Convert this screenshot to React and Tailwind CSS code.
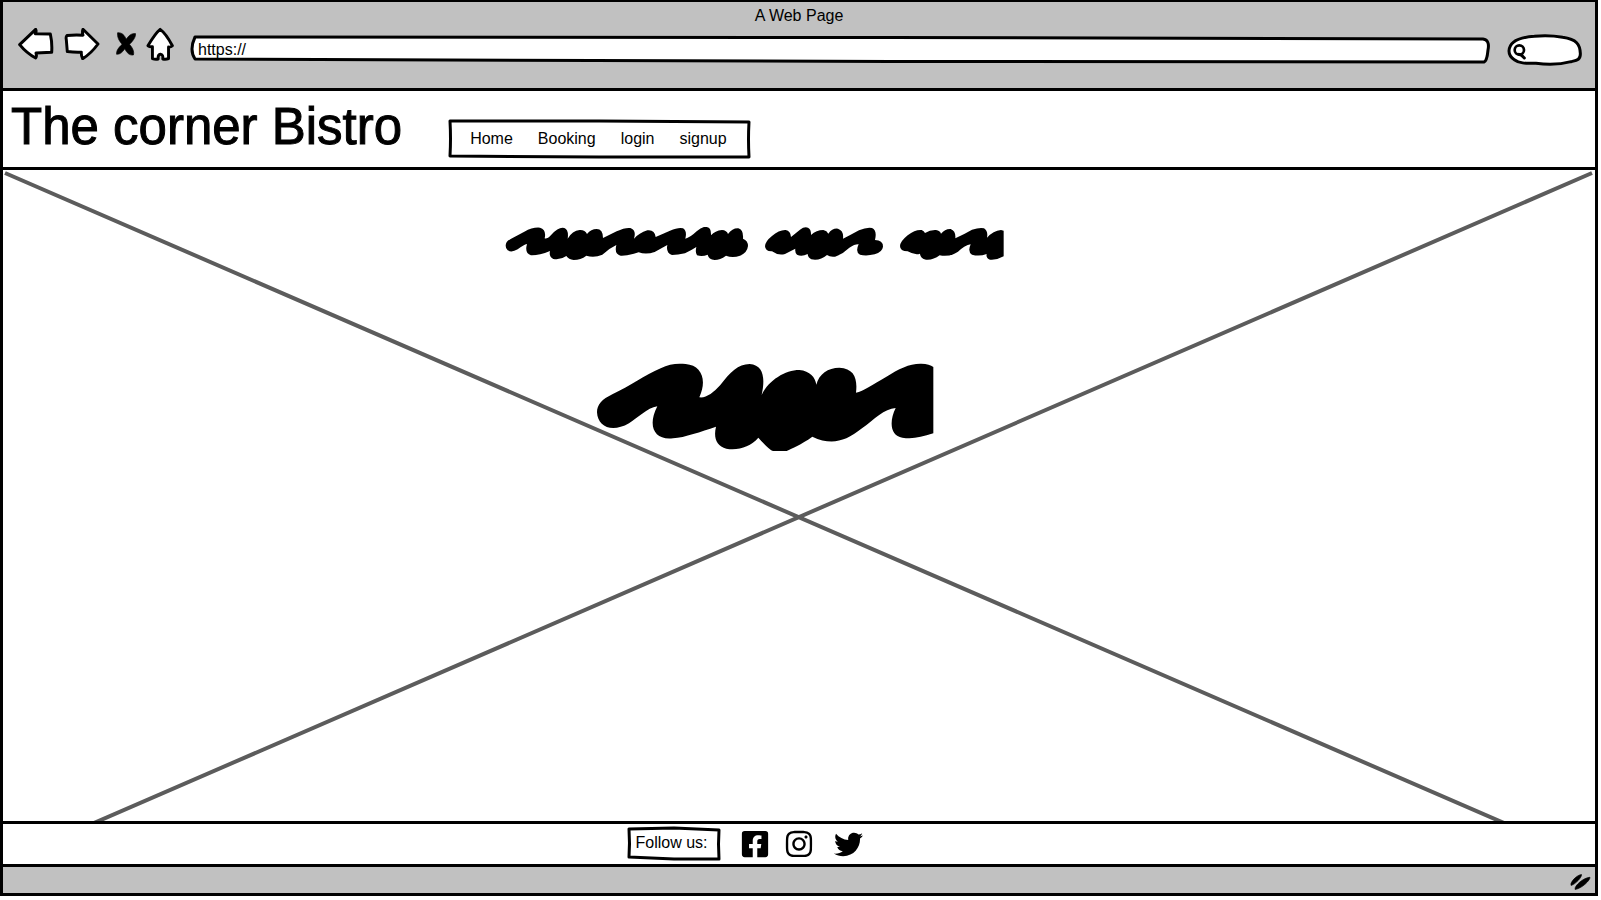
import React from "react";
import { FaFacebookSquare, FaInstagram, FaTwitter } from "react-icons/fa";

const ink = {
  fill: "white",
  stroke: "black",
  strokeWidth: 9,
  strokeLinejoin: "round",
  strokeLinecap: "round",
};

function BackIcon() {
  return (
    <svg className="h-8 w-9" viewBox="54 84 108 96" aria-hidden="true">
      <path {...ink} d="M59 134 L107 88 Q110 94 106 101 L151 102 Q157 128 155 157 L108 159 Q111 168 107 174 Q80 160 59 134Z" />
    </svg>
  );
}

function ForwardIcon() {
  return (
    <svg className="h-8 w-9" viewBox="193 84 108 98" aria-hidden="true">
      <path {...ink} d="M296 133 L250 88 Q247 96 250 106 Q225 104 201 107 Q197 111 199 120 L202 156 Q225 159 245 158 Q244 169 249 178 Q275 162 296 133Z" />
    </svg>
  );
}

function StopIcon() {
  return (
    <svg className="h-6 w-5" viewBox="347 91 62 74" aria-hidden="true">
      <path d="M352 93 C366 92 373 101 379 113 C387 101 396 94 408 96 C408 108 399 119 389 129 C398 140 404 150 401 162 C388 164 381 155 374 143 C367 154 360 160 349 160 C347 149 356 138 366 129 C356 118 350 105 352 93Z" stroke="black" strokeWidth="2" strokeLinejoin="round" />
    </svg>
  );
}

function HomeIcon() {
  return (
    <svg className="h-9 w-7" viewBox="440 78 87 107" aria-hidden="true">
      <path {...ink} d="M484 86 Q469 98 446 137 Q452 141 460 140 L460 177 Q469 180 478 178 Q476 165 485 163 Q494 164 492 178 Q502 180 510 177 L510 141 Q517 142 522 137 Q502 99 484 86Z" />
    </svg>
  );
}

/* Hand-drawn outline that stretches to whatever box holds it. */
function Sketch({ d, viewBox, fill = "white" }) {
  return (
    <svg className="absolute inset-0 size-full overflow-visible" viewBox={viewBox} preserveAspectRatio="none" aria-hidden="true">
      <path d={d} fill={fill} stroke="black" strokeWidth="3" strokeLinejoin="round" vectorEffect="non-scaling-stroke" />
    </svg>
  );
}

function Toolbar() {
  return (
    <header className="border-b-3 border-black bg-[#c1c1c1] pb-7">
      <p className="pt-0.5 text-center text-base leading-6">A Web Page</p>
      <div className="flex h-8 items-center pr-3 pl-[15px]">
        <div className="flex items-center">
          <button type="button" aria-label="Back"><BackIcon /></button>
          <button type="button" aria-label="Forward" className="ml-2.5"><ForwardIcon /></button>
          <button type="button" aria-label="Stop" className="ml-4"><StopIcon /></button>
          <button type="button" aria-label="Home" className="ml-2.5"><HomeIcon /></button>
        </div>
        <div className="relative mt-3 ml-4 h-6 flex-1">
          <Sketch viewBox="0 0 1296 24" d="M5 -1 L700 -0.5 L1292 1 Q1299 2 1297 12 Q1296 23 1293 24 L700 23.5 L5 21 Q-1 12 5 -1Z" />
          <input aria-label="Address" defaultValue="https://" className="relative block size-full bg-transparent px-2 text-base leading-6 outline-none" />
        </div>
        <div className="relative mt-3 ml-5 h-8 w-19">
          <svg className="absolute inset-0 size-full overflow-visible" viewBox="623 99 228 96" aria-hidden="true">
            <path {...ink} d="M629 150 C630 125 657 109 705 106 Q750 102 790 109 C832 115 842 130 843 157 C844 177 832 178 815 182 C785 190 750 192 710 187 C675 187 660 187 645 176 Q629 166 629 150Z" />
            <circle cx="660" cy="147" r="14" fill="none" stroke="black" strokeWidth="8" />
            <path d="M659 160 L667 163 L675 171" fill="none" stroke="black" strokeWidth="9" strokeLinecap="round" />
          </svg>
          <input type="search" aria-label="Search" className="relative block size-full bg-transparent pr-2 pl-6 outline-none" />
        </div>
      </div>
    </header>
  );
}

function SiteHeader() {
  return (
    <div className="flex items-start border-b-3 border-black pb-2.5 pl-2">
      <h1 className="pt-1.5 text-[51px] leading-[60px] [-webkit-text-stroke:1px_black]">The corner Bistro</h1>
      <nav className="relative mt-[30px] ml-[47px] flex h-9 w-75 items-center gap-[25px] pl-[21px] text-base">
        <Sketch viewBox="0 0 300 36" d="M1 0 L150 0 L300 1 Q299 18 300 36 L150 36 L1 35 Q2 18 1 0Z" />
        <a href="#home" className="relative">Home</a>
        <a href="#booking" className="relative">Booking</a>
        <a href="#login" className="relative">login</a>
        <a href="#signup" className="relative">signup</a>
      </nav>
    </div>
  );
}

function Headline() {
  return (
    <div className="flex gap-4" role="img" aria-label="Headline placeholder">
      <svg className="h-[34px] w-[244px]" viewBox="45 36 732 102">
        <path d="M47 92 Q47 80 62 72 L103 50 Q128 36 150 38 Q170 44 164 70 Q171 73 184 59 Q207 34 223 39 Q237 45 233 71 Q247 47 269 45 Q285 44 291 57 Q303 42 320 42 Q339 42 339 69 L380 49 Q405 37 421 39 Q440 45 432 71 Q447 54 472 46 Q494 43 497 66 L540 47 Q566 36 579 40 Q592 48 586 71 Q599 69 620 49 Q640 31 653 37 Q664 40 663 61 Q675 47 696 45 Q710 46 714 57 Q727 39 745 40 Q761 44 759 71 Q774 77 774 93 Q772 113 750 122 Q728 130 708 122 Q690 135 674 135 Q656 133 653 119 Q637 126 621 121 Q615 113 619 96 Q602 107 585 115 Q563 120 546 120 Q527 114 532 90 Q512 101 494 111 Q468 120 446 112 Q413 123 392 122 Q372 117 379 90 Q356 101 337 119 Q313 129 289 122 Q272 135 251 135 Q236 133 229 123 Q211 136 190 132 Q176 125 180 108 Q146 122 123 121 Q103 116 111 87 Q101 89 83 103 Q65 114 53 106 Q47 101 47 92Z" />
      </svg>
      <svg className="h-[34px] w-[119px]" viewBox="45 36 357 102">
        <path d="M45 94 Q46 79 65 64 Q88 44 107 45 Q122 48 123 66 L150 44 Q163 34 174 38 Q184 43 183 60 Q199 45 220 45 Q231 47 235 56 Q247 39 264 41 Q282 47 279 71 Q302 60 327 46 Q350 36 366 39 Q382 46 375 75 Q399 75 399 95 Q397 111 374 118 Q348 124 330 119 Q315 111 326 88 Q315 87 298 98 Q277 118 255 125 Q240 127 231 120 Q210 138 184 133 Q174 128 173 117 Q155 126 141 119 Q134 112 136 101 Q120 109 105 117 Q85 123 66 109 Q46 110 45 94Z" />
      </svg>
      <svg className="h-[34px] w-[104px]" viewBox="450 36 312 102">
        <path d="M450 93 Q451 79 473 61 Q496 43 515 45 Q522 48 525 54 Q541 44 558 45 Q570 47 573 56 Q585 41 602 42 Q618 48 616 70 Q640 59 666 44 Q689 37 702 40 Q715 49 711 68 Q730 47 753 45 L761 47 L761 124 Q740 136 720 134 Q707 129 710 117 Q688 125 666 119 Q652 111 662 88 Q645 91 624 110 Q599 127 569 121 Q549 136 528 134 Q511 131 510 116 Q496 122 473 109 Q450 109 450 93Z" />
      </svg>
    </div>
  );
}

function Hero() {
  return (
    <main className="relative flex-1 pb-24">
      <svg className="absolute inset-0 size-full" viewBox="0 0 1592 651" preserveAspectRatio="none" aria-hidden="true">
        <path d="M2 3 L1501 653 M1589 3 L91 653" fill="none" stroke="#5c5c5c" strokeWidth="4" vectorEffect="non-scaling-stroke" />
      </svg>
      <div className="relative flex justify-center pt-[57px] pr-[90px]">
        <Headline />
      </div>
      <div className="relative flex justify-center pt-[102px] pr-17">
        <svg className="h-[89px] w-[337px]" viewBox="52 40 1011 267" role="img" aria-label="Text placeholder">
          <path d="M52 188 C52 165 67 149 98 134 C151 109 195 77 243 56 C268 43 292 40 318 43 C366 47 383 91 359 143 C379 146 401 129 422 106 C452 68 475 43 510 43 C552 46 557 86 546 136 C566 93 616 61 659 61 C691 64 707 83 710 105 C718 73 745 54 779 54 C824 56 834 87 829 129 C851 125 881 103 919 82 C958 57 990 41 1025 42 Q1050 43 1061 52 L1061 251 C1024 263 998 269 968 264 C933 258 927 218 948 175 C914 177 884 209 847 236 C794 278 754 287 698 261 C663 286 638 295 621 304 L580 304 Q569 301 536 264 C512 291 477 303 440 297 C410 289 401 264 409 231 C363 246 316 263 280 266 C222 273 203 227 233 170 C202 175 174 205 148 221 C96 251 54 231 52 188Z" />
        </svg>
      </div>
    </main>
  );
}

function Footer() {
  return (
    <footer className="flex items-center justify-center border-y-3 border-black py-1 pr-27">
      <p className="relative h-8 w-[92px] pl-2 text-base leading-[30px]">
        <Sketch viewBox="0 0 92 32" d="M1 1 L46 0 L91 2 Q90 16 91 31 L46 31 L1 29 Q2 16 1 1Z" />
        <span className="relative">Follow us:</span>
      </p>
      <div className="ml-5 flex items-center">
        <a href="#facebook" aria-label="Facebook"><FaFacebookSquare className="size-[30px]" /></a>
        <a href="#instagram" aria-label="Instagram" className="ml-3.5"><FaInstagram className="size-[30px]" /></a>
        <a href="#twitter" aria-label="Twitter" className="ml-5"><FaTwitter className="size-[29px]" /></a>
      </div>
    </footer>
  );
}

function StatusBar() {
  return (
    <div className="flex h-[26px] items-end justify-end bg-[#c1c1c1] pr-1 pb-0.5">
      <svg className="h-[18px] w-[21px]" viewBox="334 221 62 52" aria-hidden="true">
        <path d="M337 256 C334 248 354 226 368 225 C370 232 350 254 337 257Z M349 268 C347 258 374 234 393 233 C394 241 370 266 349 269Z" stroke="black" strokeWidth="2" strokeLinejoin="round" />
      </svg>
    </div>
  );
}

export default function App() {
  return (
    <div className="flex min-h-screen flex-col bg-white pr-[3px] pb-1 font-['Liberation_Sans',sans-serif] text-black">
      <div className="flex flex-1 flex-col border-3 border-t-2 border-black">
        <Toolbar />
        <SiteHeader />
        <Hero />
        <Footer />
        <StatusBar />
      </div>
    </div>
  );
}
